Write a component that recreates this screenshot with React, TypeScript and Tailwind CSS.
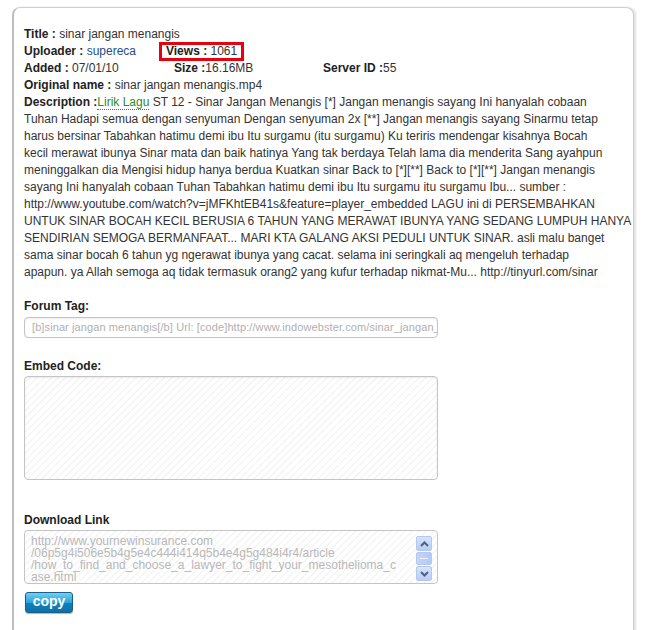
import React from 'react';

const descLines = [
  'ST 12 - Sinar Jangan Menangis [*] Jangan menangis sayang Ini hanyalah cobaan',
  'Tuhan Hadapi semua dengan senyuman Dengan senyuman 2x [**] Jangan menangis sayang Sinarmu tetap',
  'harus bersinar Tabahkan hatimu demi ibu Itu surgamu (itu surgamu) Ku teriris mendengar kisahnya Bocah',
  'kecil merawat ibunya Sinar mata dan baik hatinya Yang tak berdaya Telah lama dia menderita Sang ayahpun',
  'meninggalkan dia Mengisi hidup hanya berdua Kuatkan sinar Back to [*][**] Back to [*][**] Jangan menangis',
  'sayang Ini hanyalah cobaan Tuhan Tabahkan hatimu demi ibu Itu surgamu itu surgamu Ibu... sumber :',
  'http://www.youtube.com/watch?v=jMFKhtEB41s&feature=player_embedded LAGU ini di PERSEMBAHKAN',
  'UNTUK SINAR BOCAH KECIL BERUSIA 6 TAHUN YANG MERAWAT IBUNYA YANG SEDANG LUMPUH HANYA',
  'SENDIRIAN SEMOGA BERMANFAAT... MARI KTA GALANG AKSI PEDULI UNTUK SINAR. asli malu banget',
  'sama sinar bocah 6 tahun yg ngerawat ibunya yang cacat. selama ini seringkali aq mengeluh terhadap',
  'apapun. ya Allah semoga aq tidak termasuk orang2 yang kufur terhadap nikmat-Mu... http://tinyurl.com/sinar',
];

const hatch =
  'bg-[repeating-linear-gradient(135deg,#ffffff_0px,#ffffff_3px,#f1f1f1_4px,#ffffff_5px)]';

function Label({ children }: { children: React.ReactNode }) {
  return <div className="font-bold text-[#222] text-[12px] leading-[17px]">{children}</div>;
}

export default function App() {
  return (
    <div className="w-[648px] h-[630px] bg-white overflow-hidden font-['Liberation_Sans',Arial,sans-serif] text-[12px] leading-[17px] text-[#333]">
      <div className="ml-[12px] mt-[7px] w-[622px] h-[640px] border border-[#cfcfcf] border-l-2 border-l-[#bdbdbd] rounded-t-[8px] shadow-[2px_0_2px_rgba(0,0,0,0.12)] pl-[10px] pt-[18px]">
        <div>
          <b className="text-[#222]">Title : </b>sinar jangan menangis
        </div>
        <div className="flex">
          <div className="w-[135px]">
            <b className="text-[#222]">Uploader : </b>
            <span className="text-[#1d4e89]">supereca</span>
          </div>
          <div className="border-[3px] border-[#e8000d] px-[4px] leading-[13px] h-[19px] -mt-[1px] -mb-[1px]">
            <b className="text-[#222]">Views : </b>1061
          </div>
        </div>
        <div className="flex">
          <div className="w-[150px]">
            <b className="text-[#222]">Added : </b>07/01/10
          </div>
          <div className="w-[149px]">
            <b className="text-[#222]">Size :</b>16.16MB
          </div>
          <div>
            <b className="text-[#222]">Server ID :</b>55
          </div>
        </div>
        <div>
          <b className="text-[#222]">Original name : </b>sinar jangan menangis.mp4
        </div>
        <div className="whitespace-nowrap">
          {descLines.map((l, i) => (
            <div key={i}>
              {i === 0 && (
                <>
                  <b className="text-[#222]">Description :</b>
                  <span className="text-[#2e8b2e] border-b border-dotted border-[#2e8b2e]">Lirik Lagu</span>{' '}
                </>
              )}
              {l}
            </div>
          ))}
        </div>

        <div className="mt-[17px]">
          <Label>Forum Tag:</Label>
          <div className="mt-[2px] w-[414px] h-[21px] border border-[#c4c4c4] rounded-[4px] shadow-[inset_0_1px_2px_rgba(0,0,0,0.08)] px-[7px] text-[11px] leading-[19px] tracking-[0.1px] text-[#b0b0b0] overflow-hidden whitespace-nowrap">
            [b]sinar jangan menangis[/b] Url: [code]http://www.indowebster.com/sinar_jangan_menangis.html[/code]
          </div>
        </div>

        <div className="mt-[20px]">
          <Label>Embed Code:</Label>
          <div className={`mt-[1px] w-[414px] h-[104px] border border-[#c4c4c4] rounded-[4px] shadow-[inset_0_1px_2px_rgba(0,0,0,0.08)] ${hatch}`} />
        </div>

        <div className="mt-[32px]">
          <Label>Download Link</Label>
          <div className={`mt-[1px] w-[414px] h-[54px] border border-[#c4c4c4] rounded-[4px] flex overflow-hidden ${hatch}`}>
            <div className="flex-1 overflow-hidden pl-[6px] pt-[4px] text-[12px] leading-[12px] text-[#b8b8b8] whitespace-nowrap">
              <div>http://www.yournewinsurance.com</div>
              <div>/06p5g4i506e5b4g5e4c444i414q5b4e4g5g484i4r4/article</div>
              <div>/how_to_find_and_choose_a_lawyer_to_fight_your_mesothelioma_c</div>
              <div>ase.html</div>
            </div>
            <div className="w-[16px] mr-[5px] mt-[5px] flex flex-col gap-[1px]">
              <div className="h-[15px] rounded-[2px] border border-[#b4c8f0] bg-[linear-gradient(#d7e3fb,#b9cdf5)] flex items-center justify-center">
                <svg width="9" height="6" viewBox="0 0 9 6">
                  <path d="M1 5 L4.5 1.5 L8 5" fill="none" stroke="#4d6185" strokeWidth="2" />
                </svg>
              </div>
              <div className="h-[13px] rounded-[2px] border border-[#b4c8f0] bg-[linear-gradient(90deg,#c5d6f7,#b3c8f3)] flex items-center justify-center">
                <div className="w-[8px] h-[1px] bg-[#eef3fd]" />
              </div>
              <div className="h-[15px] rounded-[2px] border border-[#b4c8f0] bg-[linear-gradient(#d7e3fb,#b9cdf5)] flex items-center justify-center">
                <svg width="9" height="6" viewBox="0 0 9 6">
                  <path d="M1 1 L4.5 4.5 L8 1" fill="none" stroke="#4d6185" strokeWidth="2" />
                </svg>
              </div>
            </div>
          </div>
        </div>

        <button className="mt-[8px] ml-[1px] w-[48px] h-[21px] rounded-[3px] border border-[#1d5f86] bg-[linear-gradient(#6fd0f3,#2aa4d8_50%,#1181bd_51%,#0f70a8)] text-white font-bold text-[14px] leading-[17px] font-['Liberation_Sans',Arial,sans-serif] shadow-[0_1px_1px_rgba(0,0,0,0.3)] pb-[2px]">
          copy
        </button>
      </div>
    </div>
  );
}
